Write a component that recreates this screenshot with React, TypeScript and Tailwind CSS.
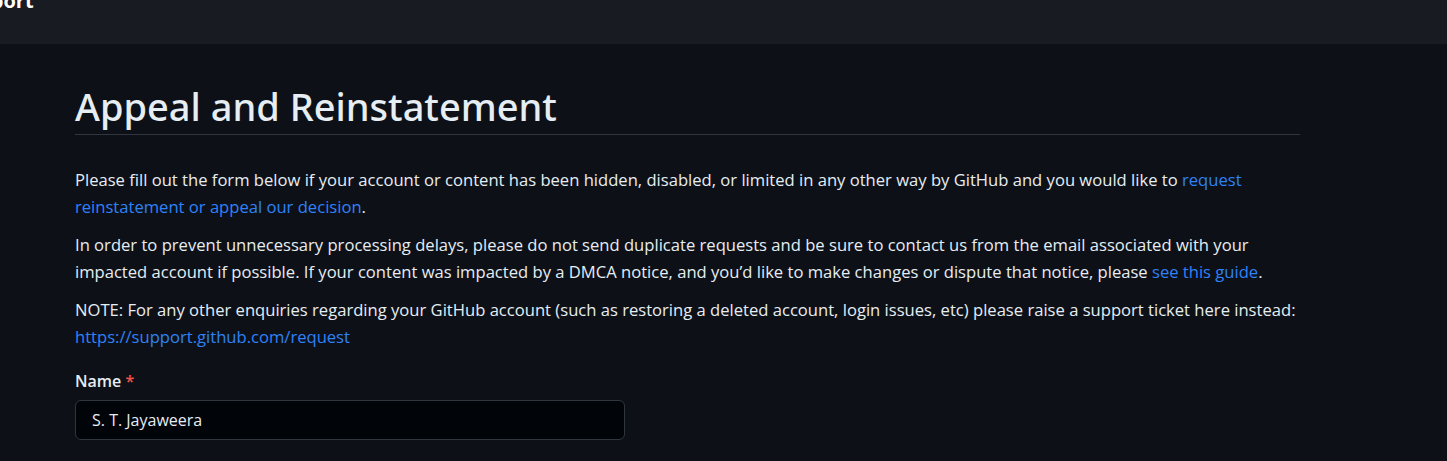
const LINK = "text-[#2f81f7] hover:underline";

export default function App() {
  return (
    <div className="min-h-screen bg-[#0d1117] text-[#e6edf3] font-['Open_Sans',sans-serif]">
      <header className="h-11 overflow-hidden bg-[#181b22]">
        <div className="-mt-[13px] -ml-[46px] text-[20px] font-bold leading-[28px] text-white">
          Support
        </div>
      </header>

      <main className="ml-[75px] w-[1225px] pt-[38px]">
        <h1 className="border-b border-[#30363d] pb-[4px] font-['Noto_Sans',sans-serif] text-[38px] font-medium leading-[48px] text-[#e6edf3]">
          Appeal and Reinstatement
        </h1>

        <div className="mt-[31px] text-[16.6px] leading-[27px]">
          <p className="mb-[11px]">
            Please fill out the form below if your account or content has been hidden, disabled, or limited in any other way by GitHub and you would like to{" "}
            <a href="#" className={LINK}>request reinstatement or appeal our decision</a>.
          </p>
          <p className="mb-[11px]">
            In order to prevent unnecessary processing delays, please do not send duplicate requests and be sure to contact us from the email associated with your impacted account if possible. If your content was impacted by a DMCA notice, and you’d like to make changes or dispute that notice, please{" "}
            <a href="#" className={LINK}>see this guide</a>.
          </p>
          <p>
            NOTE: For any other enquiries regarding your GitHub account (such as restoring a deleted account, login issues, etc) please raise a support ticket here instead:{" "}
            <a href="#" className={LINK}>https://support.github.com/request</a>
          </p>
        </div>

        {/* Name */}
        <div className="mt-[19px]">
          <label className="block text-[16px] font-semibold leading-[24px]">
            Name <span className="text-[#f85149]">*</span>
          </label>
          <input
            type="text"
            defaultValue="S. T. Jayaweera"
            className="mt-[7px] h-10 w-[550px] rounded-md border border-[#30363d] bg-[#010409] px-4 text-[16px] text-[#e6edf3] focus:outline-none"
          />
        </div>
      </main>
    </div>
  );
}
